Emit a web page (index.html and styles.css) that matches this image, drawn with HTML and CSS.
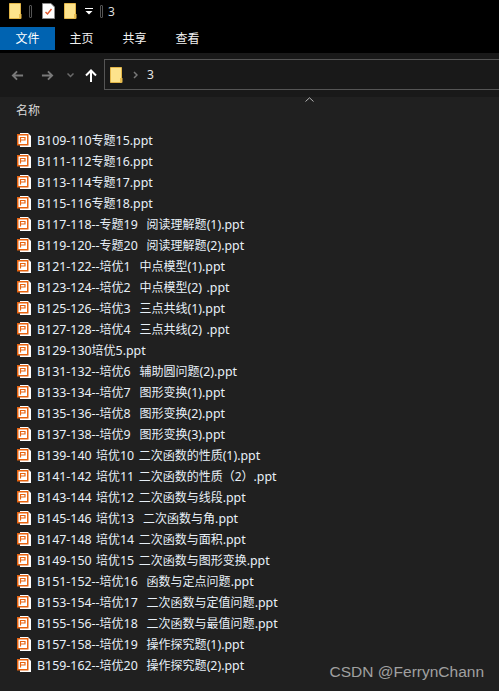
FILE: index.html
```html
<!DOCTYPE html>
<html lang="zh">
<head>
    <meta charset="UTF-8">
    <title>3</title>
    <link rel="stylesheet" href="styles.css">
</head>
<body>
    <svg class="defs" width="0" height="0">
        <symbol id="folder" viewBox="0 0 13 16">
            <path d="M0.5 0.5H11.5V15.5H0.5Z" fill="#fde38c" stroke="#e3b648"/>
            <path d="M10 15.5V11H12.5V15.5Z" fill="#e9bd4f"/>
        </symbol>
        <symbol id="ppt" viewBox="0 0 15 14">
            <path d="M3 0H11L14 3V14H3Z" fill="#fff"/>
            <rect x="0.75" y="1.75" width="10" height="10" fill="#fff" stroke="#e8630f" stroke-width="1.5"/>
            <path d="M3.5 9.5V4.5H8V7H3.5" fill="none" stroke="#e8630f" stroke-width="1.2"/>
        </symbol>
    </svg>

    <div class="titlebar">
        <svg class="qa-folder"><use href="#folder"/></svg>
        <span class="qa-sep"></span>
        <svg class="qa-doc" viewBox="0 0 13 16">
            <path d="M0.5 0.5H9L12.5 4V15.5H0.5Z" fill="#fff" stroke="#8a8a8a"/>
            <path d="M3.5 9L5.5 11L9.5 6" fill="none" stroke="#e0562b" stroke-width="1.4"/>
        </svg>
        <svg class="qa-folder"><use href="#folder"/></svg>
        <svg class="qa-drop" viewBox="0 0 8 7">
            <path d="M0 0.5H8" stroke="#fff"/>
            <path d="M0.5 3H7.5L4 6.5Z" fill="#fff"/>
        </svg>
        <span class="qa-sep qa-sep-last"></span>
        <span class="title-text">3</span>
    </div>

    <div class="ribbon">
        <span class="tab tab-file">文件</span>
        <span class="tab">主页</span>
        <span class="tab">共享</span>
        <span class="tab">查看</span>
    </div>

    <div class="navbar">
        <svg class="nav-btn nav-back" viewBox="0 0 14 12">
            <path d="M13 6H2M6.5 1.5L2 6L6.5 10.5" fill="none" stroke="#7a7a7a" stroke-width="2"/>
        </svg>
        <svg class="nav-btn nav-forward" viewBox="0 0 14 12">
            <path d="M1 6H12M7.5 1.5L12 6L7.5 10.5" fill="none" stroke="#7a7a7a" stroke-width="2"/>
        </svg>
        <svg class="nav-recent" viewBox="0 0 7 5">
            <path d="M0.5 0.5L3.5 3.5L6.5 0.5" fill="none" stroke="#6a6a6a" stroke-width="1.5"/>
        </svg>
        <svg class="nav-btn nav-up" viewBox="0 0 12 13">
            <path d="M6 13V2M1 6.5L6 1.5L11 6.5" fill="none" stroke="#fff" stroke-width="2"/>
        </svg>
        <div class="address">
            <svg class="addr-folder"><use href="#folder"/></svg>
            <svg class="addr-chevron" viewBox="0 0 5 8">
                <path d="M1 1L4 4L1 7" fill="none" stroke="#777" stroke-width="1.5"/>
            </svg>
            <span class="addr-text">3</span>
        </div>
    </div>

    <div class="content">
        <div class="column-head">
            <span class="column-name">名称</span>
            <svg class="sort-arrow" viewBox="0 0 9 5">
                <path d="M0.5 4.5L4.5 0.8L8.5 4.5" fill="none" stroke="#b5b5b5"/>
            </svg>
        </div>
        <ul class="files">
            <li><svg class="ppt"><use href="#ppt"/></svg><span>B109-110<b>专题</b>15.ppt</span></li>
            <li><svg class="ppt"><use href="#ppt"/></svg><span>B111-112<b>专题</b>16.ppt</span></li>
            <li><svg class="ppt"><use href="#ppt"/></svg><span>B113-114<b>专题</b>17.ppt</span></li>
            <li><svg class="ppt"><use href="#ppt"/></svg><span>B115-116<b>专题</b>18.ppt</span></li>
            <li><svg class="ppt"><use href="#ppt"/></svg><span>B117-118--<b>专题</b>19  <b>阅读理解题</b>(1).ppt</span></li>
            <li><svg class="ppt"><use href="#ppt"/></svg><span>B119-120--<b>专题</b>20  <b>阅读理解题</b>(2).ppt</span></li>
            <li><svg class="ppt"><use href="#ppt"/></svg><span>B121-122--<b>培优</b>1  <b>中点模型</b>(1).ppt</span></li>
            <li><svg class="ppt"><use href="#ppt"/></svg><span>B123-124--<b>培优</b>2  <b>中点模型</b>(2) .ppt</span></li>
            <li><svg class="ppt"><use href="#ppt"/></svg><span>B125-126--<b>培优</b>3  <b>三点共线</b>(1).ppt</span></li>
            <li><svg class="ppt"><use href="#ppt"/></svg><span>B127-128--<b>培优</b>4  <b>三点共线</b>(2) .ppt</span></li>
            <li><svg class="ppt"><use href="#ppt"/></svg><span>B129-130<b>培优</b>5.ppt</span></li>
            <li><svg class="ppt"><use href="#ppt"/></svg><span>B131-132--<b>培优</b>6  <b>辅助圆问题</b>(2).ppt</span></li>
            <li><svg class="ppt"><use href="#ppt"/></svg><span>B133-134--<b>培优</b>7  <b>图形变换</b>(1).ppt</span></li>
            <li><svg class="ppt"><use href="#ppt"/></svg><span>B135-136--<b>培优</b>8  <b>图形变换</b>(2).ppt</span></li>
            <li><svg class="ppt"><use href="#ppt"/></svg><span>B137-138--<b>培优</b>9  <b>图形变换</b>(3).ppt</span></li>
            <li><svg class="ppt"><use href="#ppt"/></svg><span>B139-140 <b>培优</b>10 <b>二次函数的性质</b>(1).ppt</span></li>
            <li><svg class="ppt"><use href="#ppt"/></svg><span>B141-142 <b>培优</b>11 <b>二次函数的性质（2）</b>.ppt</span></li>
            <li><svg class="ppt"><use href="#ppt"/></svg><span>B143-144 <b>培优</b>12 <b>二次函数与线段</b>.ppt</span></li>
            <li><svg class="ppt"><use href="#ppt"/></svg><span>B145-146 <b>培优</b>13  <b>二次函数与角</b>.ppt</span></li>
            <li><svg class="ppt"><use href="#ppt"/></svg><span>B147-148 <b>培优</b>14 <b>二次函数与面积</b>.ppt</span></li>
            <li><svg class="ppt"><use href="#ppt"/></svg><span>B149-150 <b>培优</b>15 <b>二次函数与图形变换</b>.ppt</span></li>
            <li><svg class="ppt"><use href="#ppt"/></svg><span>B151-152--<b>培优</b>16  <b>函数与定点问题</b>.ppt</span></li>
            <li><svg class="ppt"><use href="#ppt"/></svg><span>B153-154--<b>培优</b>17  <b>二次函数与定值问题</b>.ppt</span></li>
            <li><svg class="ppt"><use href="#ppt"/></svg><span>B155-156--<b>培优</b>18  <b>二次函数与最值问题</b>.ppt</span></li>
            <li><svg class="ppt"><use href="#ppt"/></svg><span>B157-158--<b>培优</b>19  <b>操作探究题</b>(1).ppt</span></li>
            <li><svg class="ppt"><use href="#ppt"/></svg><span>B159-162--<b>培优</b>20  <b>操作探究题</b>(2).ppt</span></li>
        </ul>
        <div class="watermark">CSDN @FerrynChann</div>
    </div>
</body>
</html>
```

FILE: styles.css
```css
* {
    box-sizing: border-box;
}

html, body {
    margin: 0;
    height: 100%;
}

body {
    width: 499px;
    height: 691px;
    overflow: hidden;
    display: flex;
    flex-direction: column;
    background: #202020;
    color: #fff;
    font-family: "Noto Sans", "Noto Sans CJK SC", sans-serif;
    font-size: 12px;
}

.defs {
    position: absolute;
}

/* title bar */
.titlebar {
    height: 27px;
    flex: none;
    background: #000;
    display: flex;
    align-items: center;
    padding: 0 0 5px 9px;
}

.qa-folder {
    width: 13px;
    height: 16px;
}

.qa-sep {
    width: 3px;
    height: 13px;
    margin: 0 7px;
    border: 1px solid #555;
    border-radius: 1px;
}

.qa-sep + .qa-doc {
    margin-left: 3px;
}

.qa-doc {
    width: 13px;
    height: 16px;
    margin-right: 9px;
}

.qa-drop {
    width: 8px;
    height: 7px;
    margin-left: 8px;
}

.qa-sep-last {
    margin-right: 5px;
}

.title-text {
    color: #ddd;
}

/* ribbon tabs */
.ribbon {
    height: 26px;
    flex: none;
    background: #000;
    display: flex;
    align-items: flex-start;
}

.tab {
    width: 53px;
    height: 23px;
    line-height: 23px;
    text-align: center;
    color: #f2f2f2;
}

.tab-file {
    width: 55px;
    background: #0063b1;
    color: #fff;
}

/* back, forward, up and the address box */
.navbar {
    height: 44px;
    flex: none;
    background: #191919;
    display: flex;
    align-items: center;
    padding-left: 11px;
}

.nav-btn {
    height: 13px;
}

.nav-back,
.nav-forward {
    width: 13px;
}

.nav-forward {
    margin-left: 17px;
}

.nav-recent {
    width: 7px;
    height: 5px;
    margin-left: 13px;
}

.nav-up {
    width: 12px;
    margin-left: 11px;
}

.address {
    flex: 1;
    height: 31px;
    margin-left: 7px;
    margin-top: -1px;
    border: 1px solid #555;
    border-right: none;
    display: flex;
    align-items: center;
    padding-left: 5px;
}

.addr-folder {
    width: 13px;
    height: 16px;
}

.addr-chevron {
    width: 5px;
    height: 8px;
    margin-left: 10px;
}

.addr-text {
    margin-left: 9px;
    color: #e6e6e6;
}

/* file list */
.content {
    flex: 1;
    position: relative;
    background: #202020;
}

.column-head {
    height: 32px;
    position: relative;
    padding: 5px 0 0 16px;
    color: #d8d8d8;
    line-height: 18px;
}

.sort-arrow {
    position: absolute;
    left: 305px;
    top: 0;
    width: 9px;
    height: 5px;
}

.files {
    list-style: none;
    margin: 0;
    padding: 0 0 0 17px;
}

.files li {
    height: 21px;
    display: flex;
    align-items: center;
    white-space: pre;
    font-size: 12.4px;
    word-spacing: 1.2px;
    color: #e8f0f8;
}

/* chinese runs sit a touch smaller than the latin ones */
.files b {
    font-size: 12px;
    font-weight: normal;
}

.ppt {
    width: 15px;
    height: 14px;
    margin-right: 5px;
    flex: none;
}

.watermark {
    position: absolute;
    right: 15px;
    bottom: 10px;
    font-family: "Liberation Sans", sans-serif;
    font-size: 15.5px;
    color: #a0a0a0;
}
```
